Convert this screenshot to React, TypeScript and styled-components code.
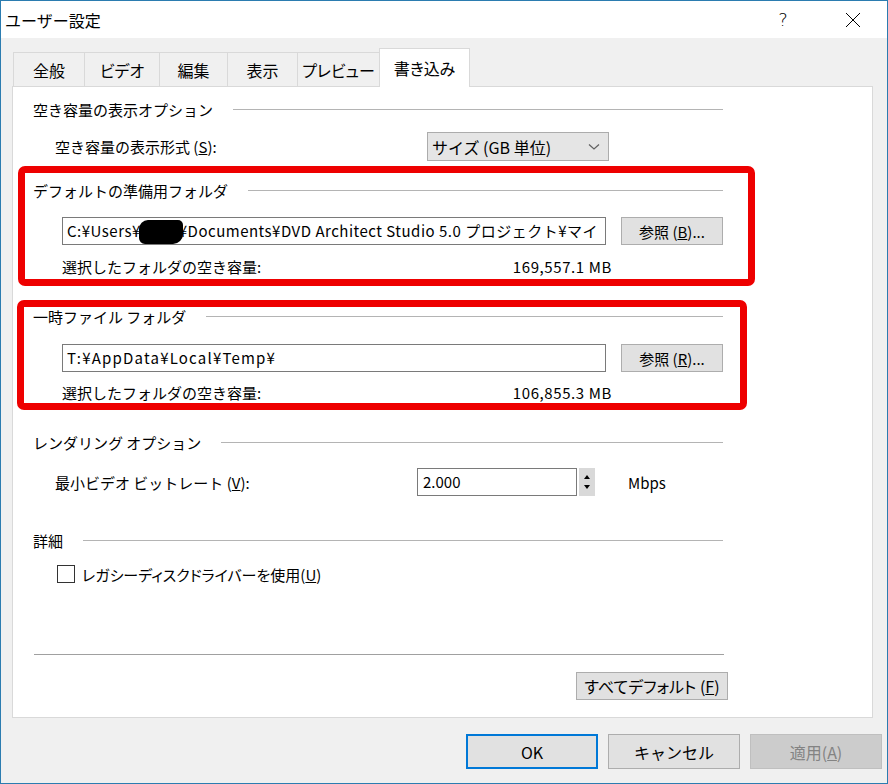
import styled, { createGlobalStyle } from "styled-components";

const GlobalStyle = createGlobalStyle`
  html, body {
    margin: 0;
    padding: 0;
    background: #fff;
  }
  body {
    font-family: "Noto Sans CJK JP", "Noto Sans", sans-serif;
    color: #000;
  }
  * {
    box-sizing: border-box;
  }
`;

const tabs = ["全般", "ビデオ", "編集", "表示", "プレビュー", "書き込み"];
const tabWidths = [72, 76, 69, 71, 83, 91];

const App = () => {
  return (
    <>
      <GlobalStyle />
      <Window>
        <TitleBar>
          <Title>ユーザー設定</Title>
          <CaptionButton>?</CaptionButton>
          <CaptionButton>
            <svg width="16" height="16" viewBox="0 0 16 16">
              <path d="M1 1 L15 15 M15 1 L1 15" stroke="#000" strokeWidth="1" />
            </svg>
          </CaptionButton>
        </TitleBar>
        <Body>
          <TabRow>
            {tabs.map((t, i) => (
              <Tab key={t} $active={i === tabs.length - 1} $width={tabWidths[i]}>
                {t}
              </Tab>
            ))}
          </TabRow>
          <Panel>
            <SectionHeader $height={24}>
              空き容量の表示オプション
              <Rule />
            </SectionHeader>
            <FormRow $top={11} $height={29}>
              <FieldLabel $width={372}>
                空き容量の表示形式 (<u>S</u>):
              </FieldLabel>
              <Combo>
                <span>サイズ (GB 単位)</span>
                <svg width="12" height="8" viewBox="0 0 12 8">
                  <path d="M1 1.5 L6 6 L11 1.5" stroke="#606060" strokeWidth="1.2" fill="none" />
                </svg>
              </Combo>
            </FormRow>

            <RedBox $top={5} $left={15} $right={32} $bottom={2}>
              <SectionHeader $height={18} $top={8}>
                デフォルトの準備用フォルダ
                <Rule />
              </SectionHeader>
              <PathRow $top={18}>
                <PathInput $spacing={0.5}>
                  C:¥Users¥<Redacted />¥Documents¥DVD Architect Studio 5.0 プロジェクト¥マイ
                </PathInput>
                <PushButton $width={102}>
                  <span>
                    参照 (<u>B</u>)...
                  </span>
                </PushButton>
              </PathRow>
              <FreeRow $top={10}>
                <span>選択したフォルダの空き容量:</span>
                <Amount>169,557.1 MB</Amount>
              </FreeRow>
            </RedBox>

            <RedBox $top={14} $left={16} $right={24} $bottom={0}>
              <SectionHeader $height={18}>
                一時ファイル フォルダ
                <Rule />
              </SectionHeader>
              <PathRow $top={19}>
                <PathInput $spacing={1.2}>T:¥AppData¥Local¥Temp¥</PathInput>
                <PushButton $width={102}>
                  <span>
                    参照 (<u>R</u>)...
                  </span>
                </PushButton>
              </PathRow>
              <FreeRow $top={9}>
                <span>選択したフォルダの空き容量:</span>
                <Amount>106,855.3 MB</Amount>
              </FreeRow>
            </RedBox>

            <SectionHeader $height={24} $top={20}>
              レンダリング オプション
              <Rule />
            </SectionHeader>
            <FormRow $top={14} $height={28}>
              <FieldLabel $width={362}>
                最小ビデオ ビットレート (<u>V</u>):
              </FieldLabel>
              <SpinInput>2.000</SpinInput>
              <SpinButtons>
                <svg width="8" height="20" viewBox="0 0 8 20">
                  <path d="M1 7 L4 3 L7 7 Z M1 13 L4 17 L7 13 Z" fill="#000" />
                </svg>
              </SpinButtons>
              <Unit>Mbps</Unit>
            </FormRow>

            <SectionHeader $height={24} $top={32}>
              詳細
              <Rule />
            </SectionHeader>
            <CheckRow>
              <CheckBox />
              <CheckLabel>
                レガシーディスクドライバーを使用(<u>U</u>)
              </CheckLabel>
            </CheckRow>

            <Separator />
            <DefaultsButton>
              <span>
                すべてデフォルト (<u>F</u>)
              </span>
            </DefaultsButton>
          </Panel>
          <Footer>
            <DialogButton $primary>OK</DialogButton>
            <DialogButton>キャンセル</DialogButton>
            <DialogButton $disabled>
              <span>
                適用(<u>A</u>)
              </span>
            </DialogButton>
          </Footer>
        </Body>
      </Window>
    </>
  );
};

const Window = styled.div`
  width: 888px;
  height: 784px;
  border: 1px solid #2b7cb0;
  display: flex;
  flex-direction: column;
  background: #f0f0f0;
  font-size: 15px;
`;

const TitleBar = styled.div`
  height: 37px;
  background: #fff;
  display: flex;
  align-items: center;
  padding: 0 11px 0 4px;
`;

const Title = styled.div`
  flex: 1;
  font-size: 16px;
`;

const CaptionButton = styled.div`
  width: 46px;
  height: 37px;
  margin-left: 24px;
  display: flex;
  align-items: center;
  justify-content: center;
  font-family: "DejaVu Sans", sans-serif;
  font-weight: 300;
  font-size: 18px;
`;

const Body = styled.div`
  flex: 1;
  display: flex;
  flex-direction: column;
  padding: 14px 0 0 11px;
`;

const TabRow = styled.div`
  height: 34px;
  display: flex;
  align-items: flex-end;
  padding-left: 2px;
`;

const Tab = styled.div<{ $active?: boolean; $width: number }>`
  position: relative;
  z-index: ${(p) => (p.$active ? 1 : 0)};
  width: ${(p) => p.$width}px;
  height: ${(p) => (p.$active ? 39 : 34)}px;
  margin-bottom: ${(p) => (p.$active ? -1 : 0)}px;
  margin-left: -1px;
  display: flex;
  align-items: center;
  justify-content: center;
  padding-top: ${(p) => (p.$active ? 0 : 1)}px;
  font-size: 16px;
  font-feature-settings: "palt";
  background: ${(p) => (p.$active ? "#fff" : "#f0f0f0")};
  border: 1px solid #d9d9d9;
  border-bottom: none;
`;

const Panel = styled.div`
  width: 861px;
  height: 632px;
  background: #fff;
  border: 1px solid #d9d9d9;
  padding: 10px 0 0 20px;
  display: flex;
  flex-direction: column;
  & > * {
    width: 690px;
  }
`;

const SectionHeader = styled.div<{ $height: number; $top?: number }>`
  height: ${(p) => p.$height}px;
  margin-top: ${(p) => p.$top ?? 0}px;
  display: flex;
  align-items: center;
  white-space: nowrap;
`;

const Rule = styled.div`
  flex: 1;
  height: 1px;
  margin-left: 20px;
  background: #b4b4b4;
`;

const FormRow = styled.div<{ $top: number; $height: number }>`
  margin-top: ${(p) => p.$top}px;
  height: ${(p) => p.$height}px;
  padding-left: 22px;
  display: flex;
  align-items: center;
`;

const FieldLabel = styled.div<{ $width: number }>`
  width: ${(p) => p.$width}px;
`;

const Combo = styled.div`
  width: 182px;
  height: 29px;
  background: #e5e5e5;
  border: 1px solid #acacac;
  display: flex;
  align-items: center;
  justify-content: space-between;
  padding: 0 8px 0 4px;
  font-size: 16px;
`;

const RedBox = styled.div<{ $top: number; $left: number; $right: number; $bottom: number }>`
  margin: ${(p) => p.$top}px -${(p) => p.$right}px 0 -${(p) => p.$left}px;
  width: ${(p) => 690 + p.$left + p.$right}px !important;
  border: 7px solid #ee0000;
  border-radius: 7px;
  padding: 0 ${(p) => p.$right - 7}px ${(p) => p.$bottom}px ${(p) => p.$left - 7}px;
`;

const PathRow = styled.div<{ $top: number }>`
  margin-top: ${(p) => p.$top}px;
  height: 28px;
  padding-left: 29px;
  display: flex;
  align-items: center;
  gap: 15px;
`;

const PathInput = styled.div<{ $spacing: number }>`
  width: 544px;
  height: 28px;
  border: 1px solid #7a7a7a;
  padding: 0 4px;
  line-height: 26px;
  letter-spacing: ${(p) => p.$spacing}px;
  white-space: nowrap;
  overflow: hidden;
`;

const Redacted = styled.span`
  display: inline-block;
  width: 44px;
  height: 24px;
  margin: 0 -4px -7px -2px;
  background: #000;
  border-radius: 9px 5px 10px 6px;
`;

const PushButton = styled.div<{ $width: number }>`
  width: ${(p) => p.$width}px;
  height: 28px;
  background: #e1e1e1;
  border: 1px solid #adadad;
  display: flex;
  align-items: center;
  justify-content: center;
`;

const FreeRow = styled.div<{ $top: number }>`
  margin-top: ${(p) => p.$top}px;
  height: 22px;
  width: 579px;
  padding-left: 29px;
  display: flex;
  align-items: center;
  justify-content: space-between;
`;

const Amount = styled.span`
  letter-spacing: 0.6px;
`;

const SpinInput = styled.div`
  width: 160px;
  height: 28px;
  border: 1px solid #7a7a7a;
  padding: 0 5px;
  line-height: 26px;
`;

const SpinButtons = styled.div`
  width: 16px;
  height: 28px;
  margin-left: 2px;
  background: #d9d9d9;
  display: flex;
  align-items: center;
  justify-content: center;
`;

const Unit = styled.span`
  margin-left: 33px;
`;

const CheckRow = styled.div`
  margin-top: 10px;
  height: 24px;
  padding-left: 24px;
  display: flex;
  align-items: center;
  gap: 7px;
`;

const CheckLabel = styled.span`
  font-feature-settings: "palt";
`;

const CheckBox = styled.span`
  width: 18px;
  height: 18px;
  border: 1px solid #333;
  background: #fff;
`;

const Separator = styled.div`
  margin: 68px 0 0 1px;
  height: 1px;
  background: #a0a0a0;
`;

const DefaultsButton = styled.div`
  width: 152px !important;
  height: 28px;
  margin: 17px 0 0 543px;
  background: #e1e1e1;
  border: 1px solid #adadad;
  display: flex;
  align-items: center;
  justify-content: center;
  font-size: 16px;
  font-feature-settings: "palt";
`;

const Footer = styled.div`
  display: flex;
  justify-content: flex-end;
  gap: 10px;
  padding: 16px 5px 0 0;
`;

const DialogButton = styled.div<{ $primary?: boolean; $disabled?: boolean }>`
  width: 132px;
  height: 35px;
  display: flex;
  align-items: center;
  justify-content: center;
  font-size: 16px;
  background: ${(p) => (p.$disabled ? "#cccccc" : "#e1e1e1")};
  color: ${(p) => (p.$disabled ? "#838383" : "#000")};
  border: ${(p) => (p.$primary ? "2px solid #0078d7" : p.$disabled ? "1px solid #bfbfbf" : "1px solid #adadad")};
`;

export default App;
